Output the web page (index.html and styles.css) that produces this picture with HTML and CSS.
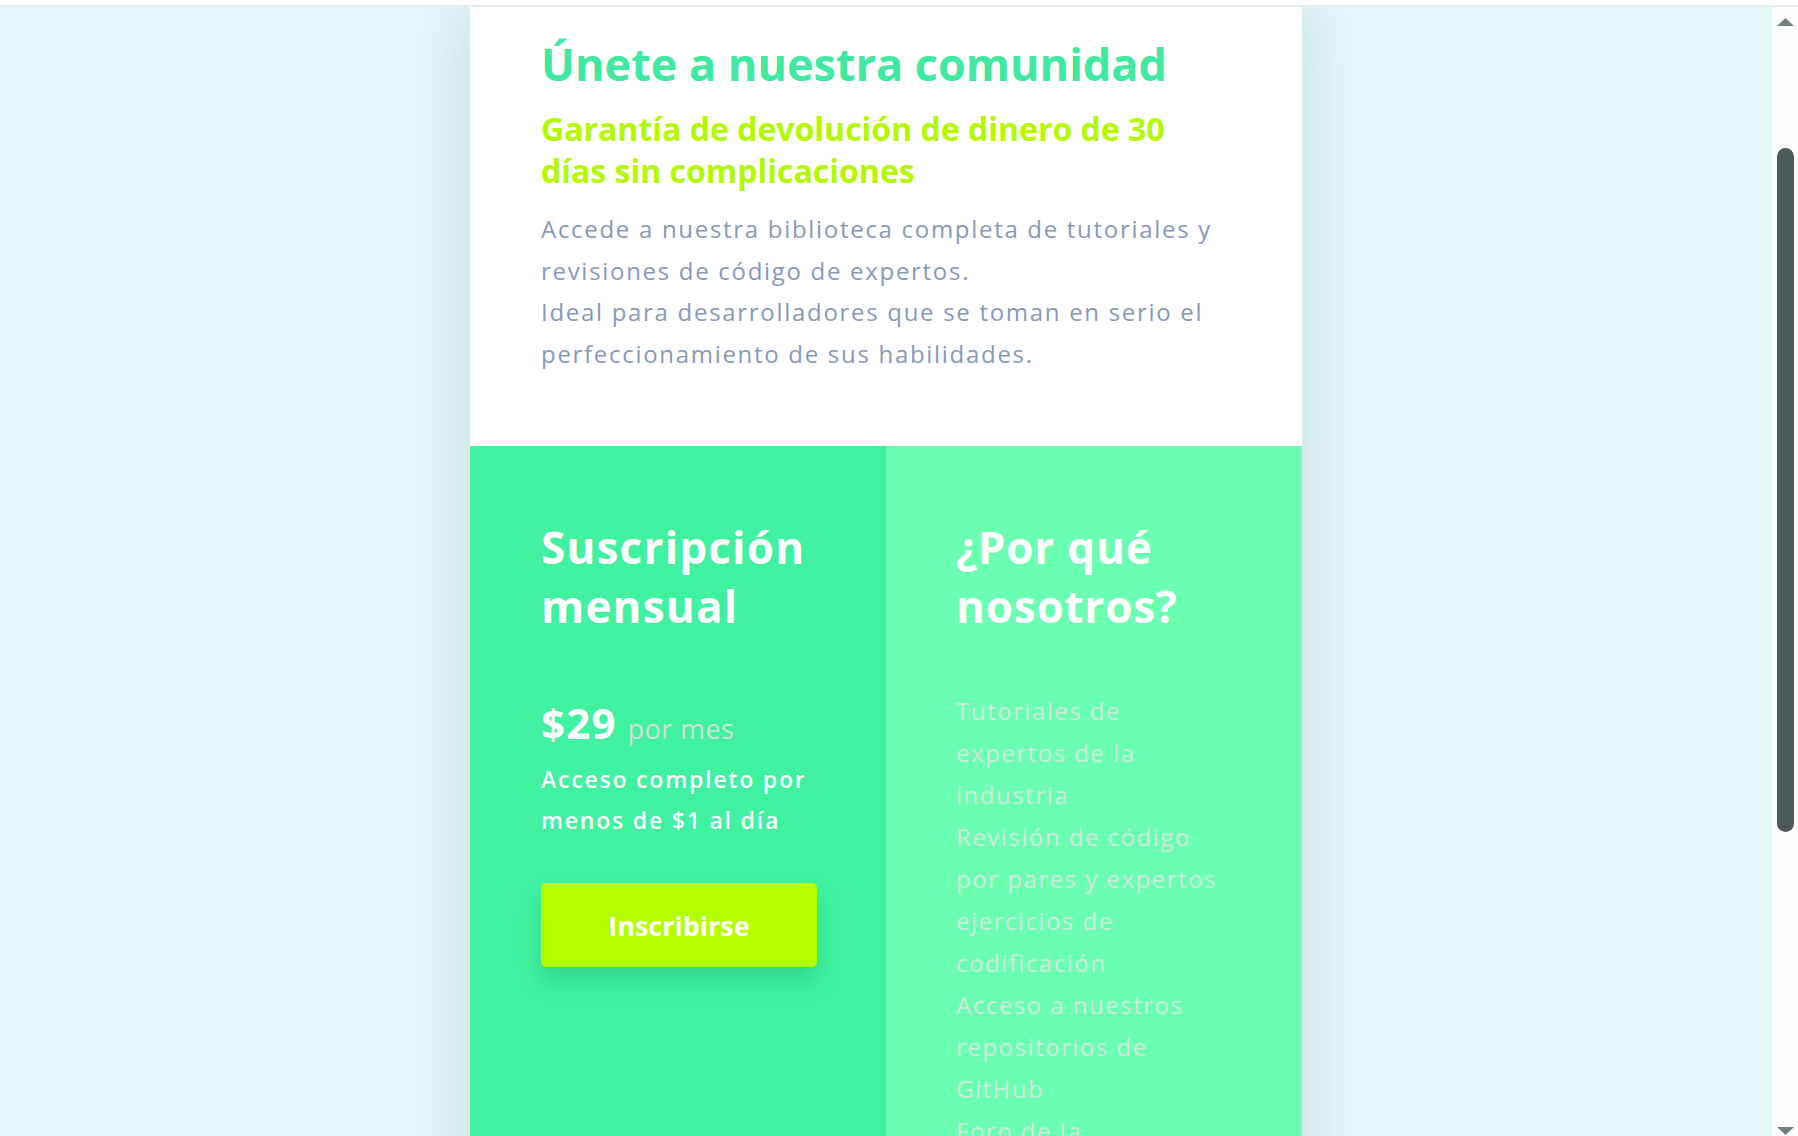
FILE: index.html
```html
<!DOCTYPE html>
<html lang="es">
<head>
<meta charset="utf-8">
<title>Únete a nuestra comunidad</title>
<link rel="stylesheet" href="styles.css">
</head>
<body>
  <div class="topstrip"></div>
  <div class="screen">
    <main class="viewport">
      <article class="card">
        <section class="intro">
          <h1>Únete a nuestra comunidad</h1>
          <h2 class="guarantee">Garantía de devolución de dinero de 30 días sin complicaciones</h2>
          <p class="lead">Accede a nuestra biblioteca completa de tutoriales y revisiones de código de expertos.<br>Ideal para desarrolladores que se toman en serio el perfeccionamiento de sus habilidades.</p>
        </section>
        <div class="columns">
          <section class="col subscription">
            <h2>Suscripción mensual</h2>
            <p class="price"><span class="amount">$29</span> <span class="per">por mes</span></p>
            <p class="access">Acceso completo por menos de $1 al día</p>
            <button class="signup" type="button">Inscribirse</button>
          </section>
          <section class="col why">
            <h2>¿Por qué nosotros?</h2>
            <ul class="reasons">
              <li>Tutoriales de expertos de la industria</li>
              <li>Revisión de código por pares y expertos</li>
              <li>ejercicios de codificación</li>
              <li>Acceso a nuestros repositorios de GitHub</li>
              <li>Foro de la comunidad</li>
              <li>Mazos de tarjetas didácticas</li>
              <li>Nuevos videos cada semana</li>
            </ul>
          </section>
        </div>
      </article>
    </main>
    <div class="scrollbar">
      <svg class="sb-up" width="17" height="8" viewBox="0 0 17 8"><polygon points="8.5,0 17,8 0,8" fill="#718284"/></svg>
      <div class="sb-thumb"></div>
      <svg class="sb-down" width="17" height="8" viewBox="0 0 17 8"><polygon points="0,0 17,0 8.5,8" fill="#718284"/></svg>
    </div>
  </div>
</body>
</html>
```

FILE: styles.css
```css
html, body {
  margin: 0;
  height: 100%;
}

body {
  font-family: "Open Sans", "Liberation Sans", sans-serif;
  display: flex;
  flex-direction: column;
  overflow: hidden;
  background: #ffffff;
}

.topstrip {
  flex: none;
  height: 5px;
  background: #ffffff;
  border-bottom: 2px solid #e7eded;
}

.screen {
  flex: 1;
  display: flex;
  min-height: 0;
}

.viewport {
  flex: 1;
  display: flex;
  justify-content: center;
  align-items: flex-start;
  overflow: hidden;
  background: #e5f7f8;
}

.card {
  flex: none;
  width: 832px;
  box-shadow: 0 0 60px rgba(0, 80, 100, 0.16);
}

.intro {
  background: #ffffff;
  padding: 30px 71px 72px;
}

.intro h1 {
  margin: 0;
  font-size: 45px;
  line-height: 54px;
  font-weight: 700;
  color: #3fe99f;
}

.guarantee {
  margin: 17px 0 0;
  font-size: 32px;
  line-height: 42px;
  font-weight: 700;
  color: #b3f900;
}

.lead {
  margin: 16px 0 0;
  font-size: 24px;
  line-height: 41.6px;
  letter-spacing: 1.7px;
  color: #8799b9;
}

.columns {
  display: grid;
  grid-template-columns: 1fr 1fr;
}

.col {
  min-width: 0;
  padding: 72px 70px 0 71px;
}

.subscription {
  background: #40f2a0;
}

.why {
  background: #6affb1;
  padding-left: 70px;
  padding-right: 80px;
}

.col h2 {
  margin: 0;
  font-size: 44px;
  line-height: 58.5px;
  font-weight: 700;
  letter-spacing: 1.2px;
  color: #ffffff;
}

.why h2 {
  letter-spacing: 0.8px;
}

.price {
  margin: 62px 0 0;
  font-size: 42px;
  line-height: 52px;
  color: #ffffff;
}

.amount {
  font-weight: 700;
  letter-spacing: 1.2px;
}

.per {
  font-size: 27px;
  letter-spacing: 0.4px;
  color: #cfe0d6;
}

.access {
  margin: 4px 0 0;
  font-size: 23px;
  line-height: 41px;
  font-weight: 600;
  letter-spacing: 1.8px;
  color: #ffffff;
}

.signup {
  display: block;
  margin-top: 42px;
  width: 276px;
  height: 84px;
  border: 0;
  border-radius: 5px;
  background: #b3ff00;
  color: #ffffff;
  font-family: "Open Sans", "Liberation Sans", sans-serif;
  font-size: 27px;
  font-weight: 700;
  box-shadow: 0 14px 22px rgba(0, 90, 50, 0.18);
}

.reasons {
  list-style: none;
  margin: 55px 0 0;
  padding: 0;
  font-size: 24px;
  line-height: 42px;
  letter-spacing: 1.5px;
  color: #d1e6da;
}

.scrollbar {
  flex: none;
  width: 26px;
  display: flex;
  flex-direction: column;
  align-items: center;
  background: #fdfdfd;
}

.sb-up {
  margin-top: 11px;
}

.sb-thumb {
  margin-top: 122px;
  width: 17px;
  height: 684px;
  border-radius: 9px;
  background: #4b5b5d;
}

.sb-down {
  margin-top: auto;
  margin-bottom: 1px;
}
```
